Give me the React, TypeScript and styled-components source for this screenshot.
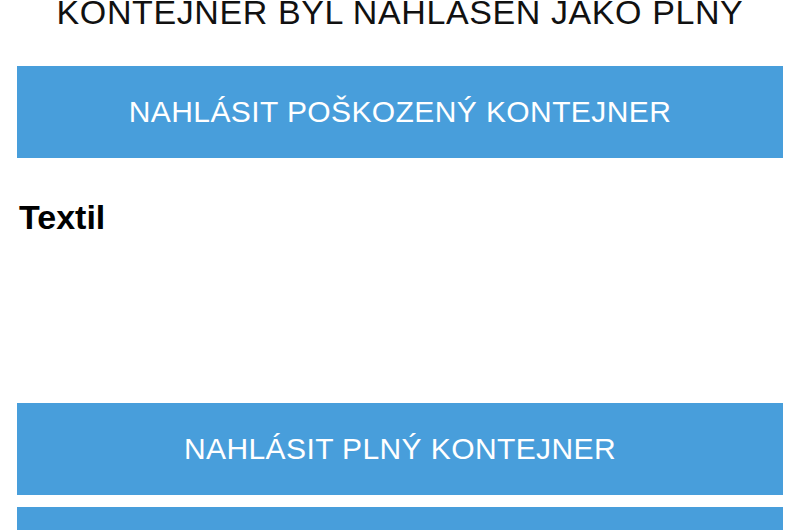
import React from "react";
import styled, { createGlobalStyle } from "styled-components";

const GlobalStyle = createGlobalStyle`
  html, body {
    margin: 0;
    padding: 0;
    background: #ffffff;
    overflow: hidden;
  }
  body {
    font-family: "Liberation Sans", Arial, sans-serif;
  }
`;

const App: React.FC = () => {
  return (
    <Page>
      <GlobalStyle />
      <Status>KONTEJNER BYL NAHLÁŠEN JAKO PLNÝ</Status>
      <ActionButton $top={37}>NAHLÁSIT POŠKOZENÝ KONTEJNER</ActionButton>

      <Section>
        <SectionTitle>Textil</SectionTitle>
      </Section>

      <ActionButton>NAHLÁSIT PLNÝ KONTEJNER</ActionButton>
      <ActionButton $top={12}>NAHLÁSIT POŠKOZENÝ KONTEJNER</ActionButton>
    </Page>
  );
};

export default App;

/* ------------------- Styled Components ------------------- */
const Page = styled.div`
  display: flex;
  flex-direction: column;
  padding: 0 17px;
  height: 530px;
  overflow: hidden;
`;

const Status = styled.div`
  margin-top: -5px;
  font-size: 34px;
  line-height: 34px;
  text-align: center;
  color: #111;
  letter-spacing: 0.6px;
  white-space: nowrap;
`;

const ActionButton = styled.button<{ $top?: number }>`
  flex: none;
  display: flex;
  align-items: center;
  justify-content: center;
  margin-top: ${(p) => p.$top ?? 0}px;
  height: 92px;
  width: 100%;
  border: none;
  border-radius: 0;
  background: #489edb;
  color: #ffffff;
  font-family: "Liberation Sans", Arial, sans-serif;
  font-size: 30px;
  font-weight: 400;
  letter-spacing: 0.4px;
  padding: 0;
  cursor: pointer;
`;

const Section = styled.div`
  flex: none;
  height: 245px;
  padding-top: 41px;
  box-sizing: border-box;
`;

const SectionTitle = styled.h3`
  margin: 0 0 0 2px;
  font-size: 34px;
  line-height: 37px;
  font-weight: 700;
  color: #000;
`;
